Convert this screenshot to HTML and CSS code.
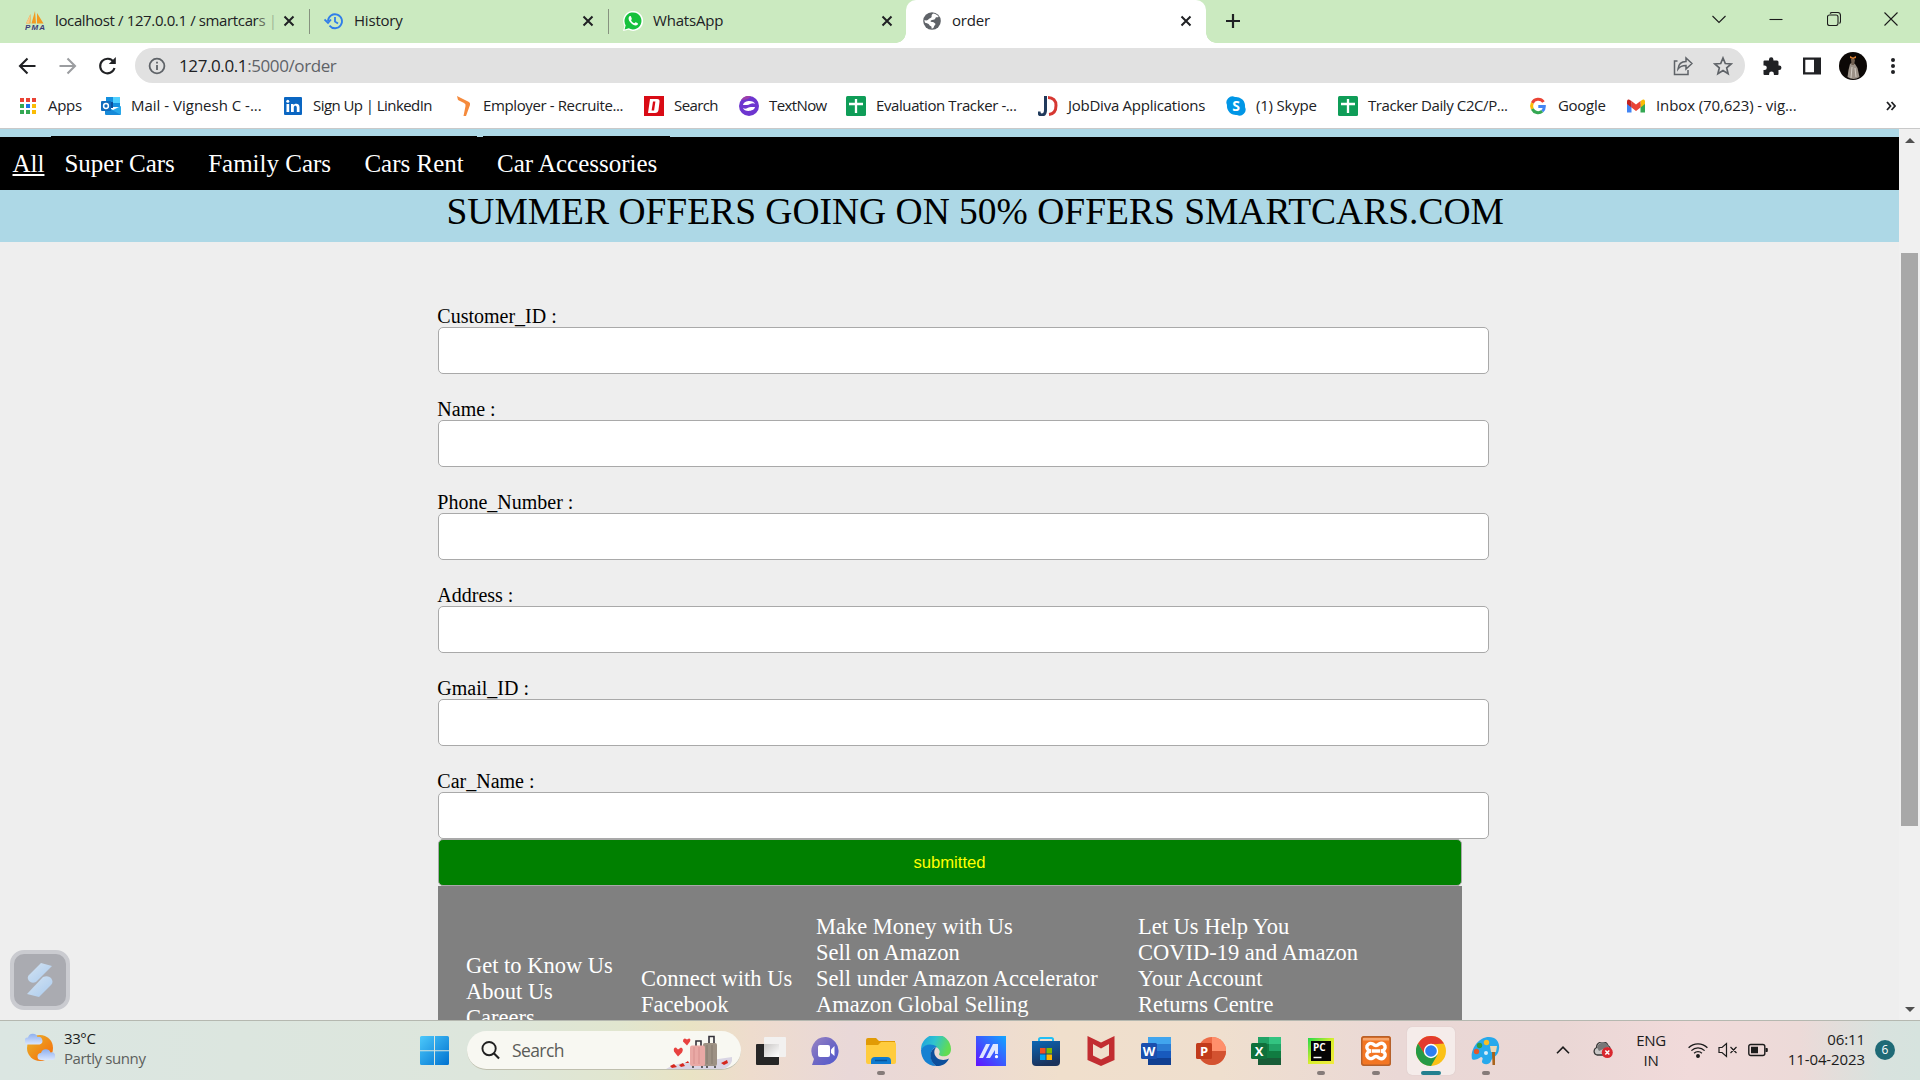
FILE: index.html
```html
<!DOCTYPE html>
<html lang="en">
<head>
<meta charset="utf-8">
<title>order</title>
<link rel="stylesheet" href="styles.css">
</head>
<body>
<div class="screen">
  <header class="browser">
    <div class="tabs">
      <div class="tab sep">
        <svg class="fav" viewBox="0 0 20 20"><path d="M1 12.500 5.500 3v9.500zM6.500 12.500 10 0l1 12.500zM12 12.500V2l6.500 10.500z" fill="#f29a1f"/><path d="M1 12.500 5.500 3l-1 9.500z" fill="#f7c88a"/><text x="0" y="19" font-size="8" font-weight="bold" font-style="italic" font-family="Liberation Sans" fill="#3f3a78" textLength="20">PMA</text></svg>
        <span class="tab-name t-local">localhost / 127.0.0.1 / smartcar<em>s</em> <i>|</i></span>
        <svg class="x" viewBox="0 0 12 12"><path d="M1.500 1.500l9 9m0-9l-9 9"/></svg>
      </div>
      <div class="tab sep">
        <svg class="fav" viewBox="0 0 20 20" fill="none" stroke="#2f7de9" stroke-width="1.800"><path d="M4 10a7 7 0 1 1 1.500 4.600"/><path d="M0.500 8.500 4 12l3-3.500M11 6v4.500l3 2"/></svg>
        <span class="tab-name">History</span>
        <svg class="x" viewBox="0 0 12 12"><path d="M1.500 1.500l9 9m0-9l-9 9"/></svg>
      </div>
      <div class="tab">
        <svg class="fav" viewBox="0 0 20 20"><path d="M0 20l1.500-5A10 10 0 1 1 5.500 18.800z" fill="#fff"/><path d="M1.600 18.400l1.100-4.100A8.500 8.500 0 1 1 5.800 17.300z" fill="#16c13d"/><path d="M6.500 5.300c-2 2-.3 5 1.500 6.800s4.700 3.500 6.600 1.700c.6-.8.3-1.500-.2-1.800l-1.700-.8c-.6-.2-.9 1-1.400 1-1.600-.5-2.700-1.700-3.200-2.900 0-.5.900-.9.700-1.500L8 5.600c-.3-.6-1-.6-1.500-.3z" fill="#fff"/></svg>
        <span class="tab-name">WhatsApp</span>
        <svg class="x" viewBox="0 0 12 12"><path d="M1.500 1.500l9 9m0-9l-9 9"/></svg>
      </div>
      <div class="tab active">
        <svg class="fav" viewBox="0 0 20 20"><circle cx="10" cy="10" r="8.800" fill="#5f6368"/><path d="M11.500 2.500C8 4 11 6 8.500 7S6 9.500 4 9.500L2.500 9c0 3 1 3 3 3.500s1.500 2 3 2.500 1 1.500 1 2.500c3 0 2-2.500 3.500-3.500s-1-3-3-3-2-1.500 0-2 3-.5 3.500-2 3 0 3-1.500c-1-1.500-2.500-2.500-5-3z" fill="#fff"/></svg>
        <span class="tab-name">order</span>
        <svg class="x" viewBox="0 0 12 12"><path d="M1.500 1.500l9 9m0-9l-9 9"/></svg>
      </div>
      <svg class="plus" viewBox="0 0 16 16"><path d="M8 1v14M1 8h14"/></svg>
      <div class="window-buttons">
        <svg viewBox="0 0 14 14"><path d="M0.500 4 7 10.500 13.500 4"/></svg>
        <svg viewBox="0 0 14 14"><path d="M.5 7.500h13"/></svg>
        <svg viewBox="0 0 14 14"><rect x=".5" y="3" width="10.500" height="10.500" rx="2"/><path d="M3 1.500Q4 .5 5.500.5H10.500q3 0 3 3V9q0 1.500-1 2.500"/></svg>
        <svg viewBox="0 0 14 14"><path d="M.5.5l13 13m0-13l-13 13"/></svg>
      </div>
    </div>
    <div class="toolbar">
      <div class="nav-buttons">
        <svg viewBox="0 0 20 20"><path d="M18.500 10H3m7.500-7.500L3 10l7.500 7.500"/></svg>
        <svg class="off" viewBox="0 0 20 20"><path d="M1.500 10H17M9.500 2.500 17 10l-7.500 7.500"/></svg>
        <svg viewBox="0 0 20 20"><path d="M15.600 6A7.300 7.300 0 1 0 16.500 12"/><path d="M17.800 1v7h-7z" fill="#202124" stroke="none"/></svg>
      </div>
      <div class="omnibox">
        <svg viewBox="0 0 18 18" fill="none" stroke="#5f6368" stroke-width="1.800"><circle cx="9" cy="9" r="7.400"/><path d="M9 8v5M9 4.800v1.800"/></svg>
        <span class="url"><b>127.0.0.1</b>:5000/order</span>
        <svg class="share" viewBox="0 0 20 20" fill="none" stroke="#5f6368" stroke-width="1.500"><path d="M4.500 5H1.500v13.500h13.500V14"/><path d="M5 13c.5-5 3.500-7.500 8-7.500V2l6 5.500-6 5.500V9.500c-4 0-6 .8-8 3.500z"/></svg>
        <svg viewBox="0 0 20 20" fill="none" stroke="#5f6368" stroke-width="1.700"><path d="M10 2l2.300 5.500 5.900.5-4.500 3.900 1.400 5.800L10 14.600l-5.100 3.100 1.400-5.800L1.800 8l5.900-.5z"/></svg>
      </div>
      <div class="actions">
        <svg viewBox="0 0 20 20"><path d="M1.500 5.500q0-1 1-1H7V3.500a2.200 2.200 0 0 1 4.400 0v1H15q1.500 0 1.500 1.500v3.500h.7a2.200 2.200 0 0 1 0 4.500h-.7V18q0 1-1 1h-3.600v-1a2.400 2.400 0 0 0-4.800 0v1H2.500q-1 0-1-1v-4h1a2.300 2.300 0 0 0 0-4.600h-1z" fill="#202124"/></svg>
        <svg viewBox="0 0 20 20"><path d="M1 1.500h18v17H1zM3.300 3.800v12.400h8.700V3.800z" fill="#202124" fill-rule="evenodd"/></svg>
        <svg class="avatar" viewBox="0 0 28 28"><circle cx="14" cy="14" r="14" fill="#0c0806"/><path d="M11 12q2-2 5 0l2.500 4 2 9q-6 4-12 0l1-7z" fill="#9c9288"/><path d="M12 7l2.500-1 1.500 2-1 5h-2.500z" fill="#705f50"/><path d="M11 4l3 1.500L17 4v2l-3 1-3-1z" fill="#d97e31"/><path d="M13 15l-1 11m4-10 1 9" stroke="#d2ccc3"/></svg>
        <svg viewBox="0 0 20 20" fill="#202124"><circle cx="10" cy="4" r="2"/><circle cx="10" cy="10" r="2"/><circle cx="10" cy="16" r="2"/></svg>
      </div>
    </div>
    <div class="bookmarks">
      <div class="bm b1"><svg viewBox="0 0 20 20"><path d="M2 2h4v4H2zM8 2h4v4H8zM14 2h4v4h-4z" fill="#ea4335"/><path d="M2 8h4v4H2zM2 14h4v4H2z" fill="#34a853"/><path d="M8 8h4v4H8z" fill="#1a73e8"/><path d="M8 14h4v4H8z" fill="#34a853"/><path d="M14 8h4v4h-4zM14 14h4v4h-4z" fill="#fbbc04"/></svg><span>Apps</span></div>
      <div class="bm b2"><svg viewBox="0 0 20 20"><path d="M5 1h14v10H5z" fill="#1490df"/><path d="M12 1h7v6h-7z" fill="#50d0ff"/><path d="M5 6h7v6H5z" fill="#0a4f9e"/><path d="M4 18V10l8 4 8-4v8q0 1-1 1H5z" fill="#28a8ea"/><path d="M4 18V10l16 9H5z" fill="#1689d8"/><rect y="5" width="10" height="10" rx="1" fill="#0f6cbd"/><circle cx="5" cy="10" r="2.400" fill="none" stroke="#fff" stroke-width="1.500"/></svg><span>Mail - Vignesh C -...</span></div>
      <div class="bm b3"><svg viewBox="0 0 20 20"><rect x="1" y="1" width="18" height="18" rx="1" fill="#0a66c2"/><path d="M3.500 8h2.700v8H3.500zM8 8h2.500v1.200C12 7 16.500 7.200 16.500 11v5h-2.700v-4.500c0-2.200-3-2.200-3 0V16H8z" fill="#fff"/><circle cx="4.800" cy="5.200" r="1.500" fill="#fff"/></svg><span>Sign Up | LinkedIn</span></div>
      <div class="bm b4"><svg viewBox="0 0 20 20"><path d="M4 0l12 6q1.500 1 1 3l-4 11h-2.500l2-10Q13 8 11 7L5 4z" fill="#f58a3c"/></svg><span>Employer - Recruite...</span></div>
      <div class="bm b5"><svg viewBox="0 0 20 20"><path d="M0 0h20v20H0z" fill="#d90b15"/><path d="M6 3h7q3 0 2.500 3l-1 8q-.5 3-3.500 3H4zM9 5.500 7.600 14.500h2.500l1.300-9z" fill="#fff" fill-rule="evenodd"/></svg><span>Search</span></div>
      <div class="bm b6"><svg viewBox="0 0 20 20"><circle cx="10" cy="10" r="10" fill="#6d35cf"/><path d="M2 4a10 10 0 0 1 10-4Q10 4 2 4z" fill="#9d3faa"/><path d="M4 9c1-5 11-5 12-1-3-2-5 1-8 1zM16 11c-1 5-11 5-12 1 3 2 5-1 8-1z" fill="#fff"/></svg><span>TextNow</span></div>
      <div class="bm b7"><svg viewBox="0 0 20 20"><rect width="20" height="20" rx="1.500" fill="#0f9d58"/><path d="M10 3v14M3 8h14" stroke="#fff" stroke-width="2.300"/></svg><span>Evaluation Tracker -...</span></div>
      <div class="bm b8"><svg viewBox="0 0 20 20" fill="none"><path d="M7.500 0v14q0 5-4 5Q1 19 1 15.500" stroke="#203a5c" stroke-width="3"/><path d="M10 1.500c5 0 8 3 8 8s-2.500 8.500-7 9" stroke="#d63832" stroke-width="3"/></svg><span>JobDiva Applications</span></div>
      <div class="bm b9"><svg viewBox="0 0 20 20"><path d="M1 9A6 6 0 0 1 9 1a9 9 0 0 1 10 10 6 6 0 0 1-8 8A9 9 0 0 1 1 9z" fill="#0096e6"/><text x="10" y="15" text-anchor="middle" font-family="Open Sans" font-size="14" font-weight="bold" fill="#fff">S</text></svg><span>(1) Skype</span></div>
      <div class="bm b10"><svg viewBox="0 0 20 20"><rect width="20" height="20" rx="1.500" fill="#0f9d58"/><path d="M10 3v14M3 8h14" stroke="#fff" stroke-width="2.300"/></svg><span>Tracker Daily C2C/P...</span></div>
      <div class="bm b11"><svg viewBox="0 0 20 20" fill="none" stroke-width="3"><path d="M15.500 6A6.500 6.500 0 0 0 4.300 7" stroke="#ea4335"/><path d="M4.300 7a7 7 0 0 0 0 6" stroke="#fbbc05"/><path d="M4.300 13a6.500 6.500 0 0 0 10 2.200" stroke="#34a853"/><path d="M14.300 15.200q2-1.800 2-4.700h-6" stroke="#4285f4"/></svg><span>Google</span></div>
      <div class="bm b12"><svg viewBox="0 0 20 20"><path d="M1 5v11.500h4.500V8z" fill="#4285f4"/><path d="M19 5v11.500h-4.500V8z" fill="#34a853"/><path d="M14.500 5 17 3.500q2-.5 2 2V8l-4.500 3.500z" fill="#fbbc04"/><path d="M5.500 5 10 8.500 14.500 5v6.500L10 15l-4.500-3.500z" fill="#ea4335"/><path d="M5.500 5 3 3.500q-2-.5-2 2V8l4.500 3.500z" fill="#c5221f"/></svg><span>Inbox (70,623) - vig...</span></div>
      <svg class="more" viewBox="0 0 10 10"><path d="M1 1l3.500 4L1 9M5.500 1 9 5 5.500 9"/></svg>
    </div>
  </header>

  <div class="viewport">
    <main class="page">
      <nav class="menu"><a class="all">All</a><a>Super Cars</a><a>Family Cars</a><a>Cars Rent</a><a>Car Accessories</a></nav>
      <h1 class="offer">SUMMER OFFERS GOING ON 50% OFFERS SMARTCARS.COM</h1>
      <form class="order">
        <label>Customer_ID :<input type="text"></label>
        <label>Name :<input type="text"></label>
        <label>Phone_Number :<input type="text"></label>
        <label>Address :<input type="text"></label>
        <label>Gmail_ID :<input type="text"></label>
        <label>Car_Name :<input type="text"></label>
        <button type="button">submitted</button>
        <footer class="links">
          <div class="col know">Get to Know Us<br>About Us<br>Careers</div>
          <div class="col connect">Connect with Us<br>Facebook</div>
          <div class="col money">Make Money with Us<br>Sell on Amazon<br>Sell under Amazon Accelerator<br>Amazon Global Selling</div>
          <div class="col help">Let Us Help You<br>COVID-19 and Amazon<br>Your Account<br>Returns Centre</div>
        </footer>
      </form>
      <div class="widget"><svg viewBox="0 0 26 34"><defs><linearGradient id="wg" x2="1" y2="1"><stop stop-color="#d5e4f2"/><stop offset="1" stop-color="#a9caee"/></linearGradient></defs><path d="M14 0 25 3 9 19Q5 21 2 18-1 14 3 11z" fill="url(#wg)"/><path d="M12 34 0 31 16 14q5-2 8 1 3 4 0 7z" fill="url(#wg)"/></svg></div>
    </main>
    <div class="scrollbar"><i class="up"></i><i class="thumb"></i><i class="down"></i></div>
  </div>

  <footer class="taskbar">
    <div class="weather">
      <svg viewBox="0 0 30 30"><defs><linearGradient id="sun" x2="1" y2="1"><stop stop-color="#e8b52c"/><stop offset="1" stop-color="#f76808"/></linearGradient><linearGradient id="cl" x2="0" y2="1"><stop stop-color="#8fb0ee"/><stop offset="1" stop-color="#d9e6ff"/></linearGradient></defs><circle cx="15" cy="15" r="13" fill="url(#sun)"/><path id="cloud" d="M3 11.500a3.500 3.500 0 0 1 0-7 5 5 0 0 1 9.500-.5 3.800 3.800 0 0 1 2 7.500z" fill="url(#cl)"/><use href="#cloud" x="13" y="15.500"/></svg>
      <div><p>33°C</p><p class="dim">Partly sunny</p></div>
    </div>
    <svg class="start" viewBox="0 0 30 30"><defs><linearGradient id="win" x2="1" y2="1"><stop stop-color="#4cc9fb"/><stop offset="1" stop-color="#0072d0"/></linearGradient></defs><path d="M1.500 0H14v14.300H0V1.500Q0 0 1.500 0zM15 0h12.500Q29 0 29 1.500v12.800H15zM0 15.300h14V29H1.500Q0 29 0 27.500zM15 15.300h14v12.200q0 1.500-1.500 1.500H15z" fill="url(#win)"/></svg>
    <div class="search">
      <svg class="lens" viewBox="0 0 20 20"><circle cx="8.500" cy="8.500" r="7" fill="none" stroke="#202020" stroke-width="2"/><path d="M13.500 13.500l5.500 5.500" stroke="#202020" stroke-width="2.200"/></svg>
      <span>Search</span>
      <svg class="bags" viewBox="0 0 68 34"><path d="M0 34Q10 27 32 27l34-5v4q-2 6-9 8z" fill="#d9d5e4"/><path d="M30 11V6h5v5M43 8V1.500h5V8" fill="none" stroke="#34313a" stroke-width="1.600"/><rect x="37" y="8" width="14" height="23" rx="2" fill="#9d9184"/><path d="M41 10v19M46 10v19" stroke="#857a6f"/><rect x="24" y="10.500" width="15" height="20.500" rx="2" fill="#e9a9a5"/><path d="M28 12v17M33 12v17" stroke="#d8918f"/><path d="M27 31v2M36 31v2M41 31v2M49 31v2" stroke="#444" stroke-width="1.600"/><path d="M12 21.500 8 16.500q-1-4 2-4l2 2 3-2q3 1 1 5zM21 10.500l-4-4q0-3 2-3l2 1 2-1q2 0 1 3z" fill="#e8413f"/><path d="M4 31l4-2 3 3-5 1zM13 30l4-2 2 3-4 1zM55 28l6-3 1 3-4 2zM19 28l3-2 1 2z" fill="#d5281e"/></svg>
    </div>
    <div class="apps">
      <div class="app"><svg viewBox="0 0 30 30"><defs><linearGradient id="tv" x2="1" y2="1"><stop stop-color="#c9c7c5"/><stop offset="1" stop-color="#fff"/></linearGradient></defs><rect y="8" width="23" height="21" rx="1" fill="#262626"/><rect x="8" y="1" width="22" height="20" rx="1" fill="#f2f1f0"/><path d="M8 8h15v13H8z" fill="url(#tv)"/></svg></div>
      <div class="app"><svg viewBox="0 0 30 30"><defs><linearGradient id="chat" x2="1" y2="1"><stop stop-color="#9a86c4"/><stop offset=".5" stop-color="#6f68c4"/><stop offset="1" stop-color="#5059cf"/></linearGradient></defs><path d="M15 1a14 14 0 1 1-3 28H1l2-6A14 14 0 0 1 15 1z" fill="url(#chat)"/><rect x="7" y="9" width="12" height="12" rx="2" fill="#fff"/><path d="M20 13.500 23.500 10v10L20 17z" fill="#fff"/></svg></div>
      <div class="app run"><svg viewBox="0 0 30 30"><path d="M0 4q0-2 2-2h8l3 3h16v4H0z" fill="#e19b05"/><path d="M0 9h12l3-3h13q2 0 2 2v18q0 2-2 2H2q-2 0-2-2z" fill="#ffcc3e"/><path d="M5 28v-3q0-4 4-4h12q4 0 4 4v3z" fill="#0f7bd0"/><path d="M9 24.500h12" stroke="#075399" stroke-width="1.500"/></svg></div>
      <div class="app"><svg viewBox="0 0 30 30"><defs><linearGradient id="eg" x2="1" y2=".3"><stop stop-color="#1c9de0"/><stop offset=".5" stop-color="#2fc3cf"/><stop offset="1" stop-color="#62dc52"/></linearGradient></defs><path d="M0 14A15 15 0 0 1 30 13c0 7-6 8-10 7-2-.5-2.500-1.500-1.500-3 2-6-12-13-18.500-3z" fill="url(#eg)"/><path d="M0 14C3 8 11 7 16 11c-7 1-9 12-1 19C6 30 0 23 0 14z" fill="#1581d2"/><path d="M16 11c-4 2-4 10 3 12.500 4 1 7 0 9-1-3 6-8 8-13 7.500-8-6-7-17 1-19z" fill="#0c4f9c"/></svg></div>
      <div class="app"><svg viewBox="0 0 30 30"><defs><linearGradient id="ma" x1="1" y1="0" x2="0" y2="1"><stop stop-color="#12a6ff"/><stop offset="1" stop-color="#6210ff"/></linearGradient></defs><path d="M0 0h30v30H0z" fill="url(#ma)"/><path d="M3 22 10 8h4L7 22zM10 22l7-14h5v10h-3v-4l-5 8z" fill="#dfe6ff"/><circle cx="20.500" cy="20.700" r="1.600" fill="#fff"/></svg></div>
      <div class="app"><svg viewBox="0 0 30 30"><defs><linearGradient id="st" x2=".3" y2="1"><stop stop-color="#0b66b5"/><stop offset="1" stop-color="#1b335c"/></linearGradient></defs><path d="M8 7V3.500Q8 2 9.500 2h11Q22 2 22 3.500V7" fill="none" stroke="#22bff5" stroke-width="2"/><path d="M1 5h28v21q0 4-4 4H5q-4 0-4-4z" fill="url(#st)"/><path d="M9 12h5.500v5.500H9z" fill="#f25022"/><path d="M15.500 12H21v5.500h-5.500z" fill="#7fba00"/><path d="M9 18.500h5.500V24H9z" fill="#00a4ef"/><path d="M15.500 18.500H21V24h-5.500z" fill="#ffb900"/></svg></div>
      <div class="app"><svg viewBox="0 0 30 30"><path d="M1.500 0 15 6.500 28.500 0v24L15 30 1.500 24zM7 8v11.500l8 4 8-4V8l-8 4.500z" fill="#c22d31" fill-rule="evenodd"/></svg></div>
      <div class="app"><svg viewBox="0 0 30 30"><path d="M7 1h23v7H7z" fill="#41a5ee"/><path d="M7 8h23v7H7z" fill="#2b7cd3"/><path d="M7 15h23v7H7z" fill="#185abd"/><path d="M7 22h23v7H7z" fill="#103f91"/><rect y="7" width="16" height="16" rx="1.500" fill="#1a4fae"/><text x="8" y="19.500" text-anchor="middle" class="glyph">W</text></svg></div>
      <div class="app"><svg viewBox="0 0 30 30"><circle cx="16" cy="15" r="14" fill="#ed6c47"/><path d="M16 1a14 14 0 0 1 14 14H16z" fill="#ff8f6b"/><path d="M2 15h28a14 14 0 0 1-28 0z" fill="#d35230"/><rect y="7" width="16" height="16" rx="1.500" fill="#c13b1b"/><text x="8" y="19.500" text-anchor="middle" class="glyph">P</text></svg></div>
      <div class="app"><svg viewBox="0 0 30 30"><path d="M7 1h23v28H7z" fill="#21a366"/><path d="M18 1h12v7H18z" fill="#33c481"/><path d="M7 8h11v14H7zM18 15h12v7H18z" fill="#107c41"/><path d="M7 22h23v7H7z" fill="#185c37"/><rect y="7" width="16" height="16" rx="1.500" fill="#0f703b"/><text x="8" y="19.500" text-anchor="middle" class="glyph">X</text></svg></div>
      <div class="app run"><svg viewBox="0 0 30 30"><defs><linearGradient id="pc" x2="1" y2="1"><stop stop-color="#22d94b"/><stop offset=".5" stop-color="#d8ee2c"/><stop offset="1" stop-color="#f2ea3f"/></linearGradient></defs><path d="M2 2h26v26H2z" fill="url(#pc)"/><path d="M5 5h20v20H5z" fill="#050505"/><text x="7" y="15" class="pc">PC</text><path d="M7.500 21.500h8" stroke="#fff" stroke-width="1.500"/></svg></div>
      <div class="app run"><svg viewBox="0 0 30 30"><rect width="30" height="30" rx="3" fill="#f37623"/><rect x=".7" y=".7" width="28.600" height="28.600" rx="2.500" fill="none" stroke="#b5612c" stroke-width="1.400"/><path d="M2 2h26v2.500H2z" fill="#f7a66d"/><path d="M10 15q-5-1-4-5 2-4 6-2 3 3 6 0 4-2 6 2 1 4-4 5 5 1 4 5-2 4-6 2-3-3-6 0-4 2-6-2-1-4 4-5zm1 0h8" fill="none" stroke="#fff" stroke-width="3.400"/></svg></div>
      <div class="app run current"><svg viewBox="0 0 30 30"><circle cx="15" cy="15" r="15" fill="#fbc116"/><path d="M2 7.500A15 15 0 0 1 28 7.500L15 8.500 8.500 18.500z" fill="#e33b2e"/><path d="M2 7.500A15 15 0 0 0 15 30l6.500-11.300H15L8.800 18.500z" fill="#269a46"/><circle cx="15" cy="15" r="7.200" fill="#fff"/><circle cx="15" cy="15" r="5.800" fill="#2d7ff0"/></svg></div>
      <div class="app run"><svg viewBox="0 0 30 30"><path d="M18 1c7 0 11 5 10 12-1 8-7 8-8 12-2 5-9 3-9 1 0-3 2-4-1-5-3 2-7 4-9 2C-1 14 7 1 18 1z" fill="#27a9ec"/><circle cx="5.500" cy="15.500" r="2.700" fill="#e2572a"/><circle cx="8.500" cy="9.500" r="2.700" fill="#2f9c44"/><circle cx="15.500" cy="6.500" r="2.700" fill="#f6bf26"/><circle cx="15" cy="17" r="2" fill="#d7edf9"/><path d="M19 10h7l-1 6h-5z" fill="#ead7b5"/><path d="M21 16h3v13h-2.500z" fill="#a9641d"/></svg></div>
    </div>
    <div class="tray">
      <svg class="chev" viewBox="0 0 14 8"><path d="M1 7.200 7 1.200l6 6" fill="none" stroke="#1c1c1c" stroke-width="1.600"/></svg>
      <svg class="drive" viewBox="0 0 20 16"><path d="M4 13a4 4 0 0 1-.5-7.500A6 6 0 0 1 15 3.500q2 1 2.500 4L10 13z" fill="#c9c7c6" stroke="#383838" stroke-width="1.300"/><path d="M4 5.500A6 6 0 0 1 15.500 4.500L6 9z" fill="#777"/><circle cx="14.300" cy="10.500" r="5.500" fill="#d9272e"/><path d="M12.300 8.500l4 4m0-4l-4 4" stroke="#fff" stroke-width="1.500"/></svg>
      <div class="lang"><p>ENG</p><p>IN</p></div>
      <svg class="wifi" viewBox="0 0 20 16" fill="none" stroke="#1c1c1c" stroke-width="1.300"><path d="M.6 5.800a13 13 0 0 1 18.800 0M3.400 8.600a9.300 9.300 0 0 1 13.200 0M6.100 11.300a5.500 5.500 0 0 1 7.800 0"/><circle cx="10" cy="14" r="1.300" fill="#1c1c1c"/></svg>
      <svg class="vol" viewBox="0 0 20 16" fill="none" stroke="#1c1c1c" stroke-width="1.200"><path d="M1 5.500h3L8.500 1.500v13L4 10.500H1zM12.500 5l6 6m0-6l-6 6"/></svg>
      <svg class="bat" viewBox="0 0 20 14"><rect x=".8" y="1.500" width="16" height="11" rx="2" fill="none" stroke="#1c1c1c" stroke-width="1.400"/><path d="M3 3.700h7v6.600H3zM17.500 5H19q.8 0 .8 1v2q0 1-.8 1h-1.500z" fill="#1c1c1c"/></svg>
      <div class="clock"><p>06:11</p><p>11-04-2023</p></div>
      <span class="count">6</span>
    </div>
  </footer>
</div>
</body>
</html>
```
FILE: styles.css
```css
* { box-sizing: border-box; }
body { margin: 0; overflow: hidden; font-family: "Open Sans", "Noto Sans", sans-serif; color: #202124; }
p { margin: 0; }
svg { display: block; flex: none; }
.screen { width: 1920px; height: 1080px; display: flex; flex-direction: column; }

/* browser frame */
.browser { height: 129px; background: #fff; border-bottom: 1px solid #c9c9c9; flex: none; }
.tabs { height: 43px; background: #cbeac0; display: flex; align-items: center; padding-left: 10px; }
.tab { width: 299px; height: 43px; padding: 0 14px 2px 15px; display: flex; align-items: center; gap: 10px; position: relative; font-size: 15px; }
.tab.sep::after { content: ""; position: absolute; right: -1px; top: 9px; width: 1px; height: 25px; background: #86927f; }
.tab.active { width: 300px; margin-left: -1px; padding-left: 16px; padding-right: 14px; background: #fff; border-radius: 10px 10px 0 0; }
.tab.active::before, .tab.active::after { content: ""; position: absolute; bottom: 0; width: 10px; height: 10px; }
.tab.active::before { left: -10px; background: radial-gradient(circle at 0 0, transparent 9.5px, #fff 10px); }
.tab.active::after { right: -10px; background: radial-gradient(circle at 100% 0, transparent 9.5px, #fff 10px); }
.fav { width: 20px; height: 20px; }
.tab-name { flex: 1; min-width: 0; white-space: nowrap; letter-spacing: -0.2px; padding-bottom: 2px; }
.t-local { letter-spacing: -0.370px; }
.tab-name em { font-style: normal; color: #67715f; }
.tab-name i { font-style: normal; color: #9fb697; }
.x { width: 12px; height: 12px; fill: none; stroke: #202124; stroke-width: 2; }
.plus { width: 16px; height: 16px; margin: 0 0 1px 19px; fill: none; stroke: #202124; stroke-width: 2.2; }
.window-buttons { margin: 0 22px 5px auto; display: flex; gap: 43.300px; }
.window-buttons svg { width: 14px; height: 14px; fill: none; stroke: #1b1b1b; stroke-width: 1.1; }
.toolbar { height: 45px; display: flex; align-items: center; }
.nav-buttons { width: 135px; padding-left: 17px; display: flex; gap: 20.500px; }
.nav-buttons svg { width: 20px; height: 20px; fill: none; stroke: #202124; stroke-width: 2.1; }
.nav-buttons .off { stroke: #9b9da0; }
.omnibox { width: 1610px; height: 35px; border-radius: 18px; background: #e1e1e1; display: flex; align-items: center; padding: 0 12px 0 13px; }
.omnibox svg { width: 20px; height: 20px; }
.omnibox svg:first-child { width: 18px; height: 18px; }
.url { flex: 1; margin-left: 13px; font-size: 17px; letter-spacing: -0.4px; color: #5f6368; }
.url b { font-weight: normal; color: #202124; }
.omnibox .share { margin-right: 20px; }
.actions { flex: 1; display: flex; align-items: center; padding-left: 17px; gap: 20px; }
.actions svg { width: 20px; height: 20px; }
.actions .avatar { width: 28px; height: 34px; margin: 0 -4px 0 -3px; }
.bookmarks { height: 40px; display: flex; align-items: center; padding: 0 0 4px 18px; font-size: 15px; }
.bm { display: flex; align-items: center; gap: 10px; white-space: nowrap; letter-spacing: -0.3px; }
.bm svg { width: 20px; height: 20px; }
.bm span { padding-bottom: 2px; }
.b1 { width: 83px; }
.b2 { width: 182px; letter-spacing: 0; }
.b3 { width: 170px; letter-spacing: -0.56px; }
.b4 { width: 191px; letter-spacing: -0.38px; }
.b5 { width: 95px; letter-spacing: -0.6px; }
.b6 { width: 107px; letter-spacing: -0.6px; }
.b7 { width: 192px; letter-spacing: -0.4px; }
.b8 { width: 188px; letter-spacing: -0.250px; }
.b9 { width: 112px; letter-spacing: -0.200px; }
.b10 { width: 190px; letter-spacing: -0.4px; }
.b11 { width: 98px; }
.b12 { width: 260px; letter-spacing: -0.100px; }
.more { width: 10px; height: 10px; fill: none; stroke: #202124; stroke-width: 1.800; }

/* web page */
.viewport { flex: 1; min-height: 0; display: flex; overflow: hidden; }
.page { width: 1899px; background: #eee; padding-top: 7px; position: relative; overflow: hidden; font-family: "Liberation Serif", serif; color: #000; box-shadow: inset 0 60px #add8e6; }
.menu { height: 54px; padding: 2px 0 0 12.500px; display: flex; align-items: center; color: #fff; font-size: 25px;
  background: linear-gradient(90deg, #add8e6 51px, #000 51px 477px, #add8e6 477px 483px, #000 483px 670px, #add8e6 670px) top / 100% 1px no-repeat, #000; }
.menu a { margin-right: 33.300px; }
.menu .all { margin-right: 20px; text-decoration: underline; }
.offer { margin: 0; height: 52px; background: #add8e6; font-size: 37.5px; line-height: 43.500px; font-weight: normal; padding-left: 446.500px; white-space: nowrap; }
.order { width: 1024px; margin: 62px 0 0 438px; }
.order label { display: block; height: 93px; font-size: 20px; line-height: 24px; text-indent: -0.700px; white-space: nowrap; margin-top: 0; }
.order label:nth-of-type(6) { height: 70px; }
.order input { display: block; width: 1051px; height: 47px; margin: -1px 0 0; border: 1px solid #a9a9a9; border-radius: 5px; background: #fff; }
.order button { display: block; width: 1024px; height: 47px; border: 1px solid #a9a9a9; border-radius: 5px; background: #008000; color: #ff0; font: 16.67px "Liberation Sans", sans-serif; padding: 0 1px 0 0; }
.links { height: 160px; background: #808080; color: #fff; display: flex; font-size: 22.5px; line-height: 26px; padding: 28px 0 0 28px; white-space: nowrap; }
.know { width: 175px; padding-top: 39px; }
.connect { width: 175px; padding-top: 52px; }
.money { width: 322px; }
.widget { position: absolute; left: 10px; top: 821px; width: 60px; height: 60px; border: 4px solid #cacbd0; border-radius: 14px; background: #aaabb1; display: flex; align-items: center; justify-content: center; }
.widget svg { width: 26px; height: 34px; }
.scrollbar { width: 21px; background: #f0f0f0; display: flex; flex-direction: column; align-items: center; }
.scrollbar i { display: block; }
.up { margin-top: 9px; border: 5px solid transparent; border-top: 0; border-bottom-color: #505050; }
.thumb { width: 17px; height: 573px; margin-top: 110px; background: #a8a8a8; }
.down { margin-top: 181px; border: 5px solid transparent; border-bottom: 0; border-top-color: #505050; }

/* taskbar */
.taskbar { height: 60px; flex: none; border-top: 1px solid #b5b8b0; display: flex; align-items: center; color: #1c1c1c;
  background: linear-gradient(90deg, #dbe6e2 0, #dde6dc 480px, #e1e6cf 620px, #e9e3c4 690px, #eedccd 750px, #e9d8d8 850px, #ebd9d4 930px, #f0dfcc 1060px, #efdfce 1220px, #ead8d6 1400px, #ead7d5 1560px, #f1dada 1690px, #ecdad8 1800px, #d8e2de 1880px, #d6e3de 1920px); }
.weather { width: 420px; padding: 0 0 5px 25px; display: flex; align-items: center; gap: 9px; font-size: 15px; line-height: 20px; }
.weather svg { width: 30px; height: 30px; }
.weather p { letter-spacing: -0.400px; }
.lang p { letter-spacing: -0.3px; }
.dim { color: #5c605d; }
.start { width: 30px; height: 30px; }
.search { width: 274px; height: 39px; margin-left: 17px; border-radius: 20px; background: #f8f8f2; border-bottom: 1px solid #bfbfae; display: flex; align-items: center; font-size: 17.5px; color: #5b5c58; }
.lens { width: 19px; height: 20px; margin-left: 14px; }
.search span { width: 154px; margin-left: 12px; letter-spacing: -0.6px; }
.bags { width: 68px; height: 34px; margin-top: 3px; }
.apps { display: flex; margin-left: 2px; }
.app { width: 55px; height: 48px; display: flex; align-items: center; justify-content: center; position: relative; }
.app svg { width: 30px; height: 30px; }
.glyph { font: bold 13px "Open Sans", sans-serif; fill: #fff; }
.pc { font: bold 10px "Open Sans", sans-serif; fill: #fff; }
.run::after { content: ""; position: absolute; bottom: 0; width: 8px; height: 4px; border-radius: 2px; background: #857b79; }
.current { width: 48px; margin: 0 3.500px; background: #f5ecea; border-radius: 5px; box-shadow: 0 0 1px #c8b9b7; }
.current::after { width: 20px; background: #23808f; }
.tray { margin-left: auto; display: flex; align-items: center; font-size: 15px; line-height: 20px; padding: 0 25px 2px 0; }
.chev { width: 14px; height: 8px; margin-right: 23px; }
.drive { width: 20px; height: 16px; }
.lang { width: 36px; text-align: center; margin-left: 20px; }
.wifi { width: 20px; height: 16px; margin-left: 19px; }
.vol { width: 20px; height: 16px; margin-left: 10px; }
.bat { width: 20px; height: 14px; margin-left: 10px; }
.clock { width: 97px; text-align: right; padding-bottom: 1px; letter-spacing: -0.1px; }
.count { width: 20px; height: 20px; margin-left: 10px; border-radius: 50%; background: #1f6a76; color: #fff; font-size: 12px; text-align: center; line-height: 19px; }
```
